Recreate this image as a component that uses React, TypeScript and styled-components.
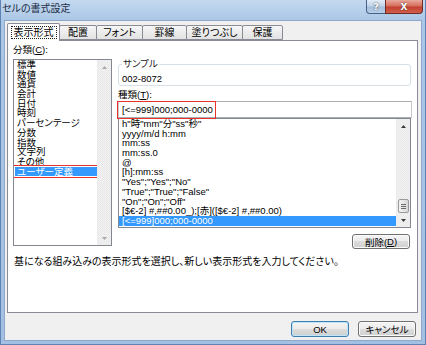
import React from "react";
import styled, { createGlobalStyle } from "styled-components";

const GlobalStyle = createGlobalStyle`
  html, body { margin: 0; padding: 0; }
  body {
    font-family: "Liberation Sans", "Noto Sans CJK JP", sans-serif;
    font-size: 9.5px;
    color: #000;
    background: #fff;
    font-feature-settings: "palt";
  }
  * { box-sizing: border-box; }
`;

const Window = styled.div`
  width: 426px;
  height: 345px;
  display: flex;
  flex-direction: column;
  background: linear-gradient(180deg, #c4d9ef 0px, #abc7e6 20px, #a3c0e2 100%);
  border-left: 1px solid #5f83b5;
  border-right: 1px solid #5f83b5;
  border-bottom: 1px solid #5f83b5;
`;

const TitleBar = styled.div`
  height: 20px;
  flex: none;
  display: flex;
  justify-content: space-between;
  align-items: flex-start;
`;

const Title = styled.div`
  padding: 3px 0 0 1px;
  font-size: 10px;
  line-height: 12px;
  color: #1c2d45;
`;

const Controls = styled.div`
  display: flex;
  margin-right: 2px;
`;

const CaptionButton = styled.div<{ $close?: boolean }>`
  width: ${(p) => (p.$close ? 38 : 20)}px;
  height: 14px;
  display: flex;
  align-items: center;
  justify-content: center;
  border: 1px solid ${(p) => (p.$close ? "#6e2a24" : "#44618a")};
  border-top: none;
  border-radius: ${(p) => (p.$close ? "0 0 4px 0" : "0 0 0 4px")};
  background: ${(p) =>
    p.$close
      ? "linear-gradient(180deg, #e9a99c 0%, #d7705f 45%, #c4402f 55%, #d0604c 100%)"
      : "linear-gradient(180deg, #e2ecf7 0%, #c3d5ea 45%, #a6bedb 55%, #b9cfe7 100%)"};
  color: #fff;
  font-family: "DejaVu Sans", sans-serif;
  font-weight: bold;
  font-size: 9px;
  text-shadow: 0 0 2px #333;
  & + & { margin-left: -1px; }
`;

const Client = styled.div`
  flex: 1;
  margin: 0 3px 3px 3px;
  background: #f0f0f0;
  border: 1px solid #8ea8cc;
  padding: 2px 3px 0 2px;
  display: flex;
  flex-direction: column;
`;

const TabRow = styled.div`
  height: 17px;
  display: flex;
  align-items: flex-end;
  position: relative;
  z-index: 1;
`;

const Tab = styled.div<{ $w: number; $active?: boolean }>`
  width: ${(p) => p.$w}px;
  height: ${(p) => (p.$active ? 18 : 15)}px;
  margin-bottom: ${(p) => (p.$active ? -1 : 0)}px;
  display: flex;
  align-items: center;
  justify-content: center;
  border: 1px solid #898c95;
  border-bottom: ${(p) => (p.$active ? "none" : "1px solid #898c95")};
  border-radius: 2px 2px 0 0;
  background: ${(p) =>
    p.$active ? "#fff" : "linear-gradient(180deg, #f7f7f7 0%, #ececec 50%, #e2e2e2 100%)"};
  font-size: 10px;
  line-height: 11px;
  padding-bottom: ${(p) => (p.$active ? 1 : 0)}px;
  & + & { margin-left: -1px; }
`;

const Focus = styled.span`
  border: 1px dotted #222;
  padding: 0 2px;
`;

const Panel = styled.div`
  height: 273px;
  flex: none;
  border: 1px solid #898c95;
  background: #fff;
  padding: 3px 5px 0 5px;
  display: flex;
  flex-direction: column;
`;

const Body = styled.div`
  display: grid;
  grid-template-columns: 99px 1fr;
  column-gap: 6px;
`;

const Column = styled.div`
  display: flex;
  flex-direction: column;
`;

const Label = styled.div<{ $top?: number }>`
  line-height: 12px;
  height: 12px;
  margin-top: ${(p) => p.$top ?? 0}px;
  white-space: nowrap;
`;

const ListBox = styled.div<{ $h: number; $top?: number }>`
  height: ${(p) => p.$h}px;
  margin-top: ${(p) => p.$top ?? 0}px;
  border: 1px solid #828790;
  background: #fff;
  display: flex;
  overflow: hidden;
`;

const Items = styled.div`
  flex: 1;
  min-width: 0;
`;

const Item = styled.div<{ $sel?: boolean; $marked?: boolean; $pad: number }>`
  line-height: 9.7px;
  height: 9.7px;
  padding-left: ${(p) => p.$pad}px;
  white-space: nowrap;
  background: ${(p) => (p.$sel ? "#3399ff" : "transparent")};
  color: ${(p) => (p.$sel ? "#fff" : "#000")};
  outline: ${(p) => (p.$marked ? "1.5px solid #e8322c" : "none")};
  outline-offset: 1px;
`;

const ScrollBar = styled.div`
  width: 14px;
  flex: none;
  display: flex;
  flex-direction: column;
  background: repeating-conic-gradient(#f3f3f3 0 25%, #e8e8e8 0 50%) 0 0 / 2px 2px;
  border-left: 1px solid #ececec;
`;

const ArrowBox = styled.div`
  height: 14px;
  flex: none;
  display: flex;
  align-items: center;
  justify-content: center;
`;

const Track = styled.div`
  flex: 1;
  display: flex;
  flex-direction: column;
  justify-content: flex-end;
`;

const Thumb = styled.div`
  height: 14px;
  margin: 0 1px;
  border: 1px solid #9a9a9a;
  border-radius: 2px;
  background: linear-gradient(90deg, #f4f4f4 0%, #e6e6e6 50%, #d6d6d6 100%);
  display: flex;
  flex-direction: column;
  align-items: center;
  justify-content: center;
  gap: 1px;
`;

const Grip = styled.div`
  width: 5px;
  height: 1px;
  background: #6a6a6a;
`;

const Group = styled.fieldset`
  margin: 15px 1px 0 0;
  padding: 4px 3px 0 3px;
  border: 1px solid #d5dfe5;
  border-radius: 3px;
  min-width: 0;
`;

const Legend = styled.legend`
  padding: 0 1px;
  line-height: 10px;
  color: #222;
`;

const SampleText = styled.div`
  line-height: 12px;
  height: 12px;
  font-size: 9.5px;
`;

const Input = styled.div`
  height: 17px;
  border: 1px solid #abadb3;
  border-left-color: #c7c9cf;
  border-right-color: #c7c9cf;
  padding-left: 3px;
  display: flex;
  align-items: center;
  white-space: nowrap;
  position: relative;
  z-index: 2;
`;

const Marked = styled.span`
  display: inline-block;
  width: 97px;
  padding: 3px 0 3px 4px;
  margin: -3px 0 -3px -4px;
  outline: 1.5px solid #e8322c;
  line-height: 10px;
`;

const ButtonRow = styled.div<{ $top: number; $right: number }>`
  display: flex;
  justify-content: flex-end;
  margin-top: ${(p) => p.$top}px;
  margin-right: ${(p) => p.$right}px;
`;

const Button = styled.div<{ $h: number; $default?: boolean }>`
  width: 58px;
  height: ${(p) => p.$h}px;
  display: flex;
  align-items: center;
  justify-content: center;
  border: 1px solid ${(p) => (p.$default ? "#3c7fb1" : "#707070")};
  border-radius: 3px;
  background: linear-gradient(180deg, #f4f4f4 0%, #ececec 50%, #dcdcdc 50%, #d0d0d0 100%);
  box-shadow: inset 0 0 0 1px ${(p) => (p.$default ? "#bfe6f8" : "#fbfbfb")};
  font-size: 9.5px;
  color: #000;
`;

const Description = styled.div`
  margin-top: 8px;
  padding-left: 1px;
  line-height: 10px;
  font-size: 10px;
  white-space: nowrap;
`;

const Footer = styled.div`
  display: flex;
  justify-content: flex-end;
  gap: 9px;
  padding: 8px 2px 0 0;
`;

const Arrow = ({ up, color }: { up?: boolean; color: string }) => (
  <svg width="5" height="3" viewBox="0 0 5 3">
    <polygon points={up ? "0,3 2.5,0 5,3" : "0,0 2.5,3 5,0"} fill={color} />
  </svg>
);

const tabs = [
  { label: "表示形式", w: 53, active: true },
  { label: "配置", w: 38 },
  { label: "フォント", w: 47 },
  { label: "罫線", w: 45 },
  { label: "塗りつぶし", w: 57 },
  { label: "保護", w: 41 },
];

const categories = [
  "標準",
  "数値",
  "通貨",
  "会計",
  "日付",
  "時刻",
  "パーセンテージ",
  "分数",
  "指数",
  "文字列",
  "その他",
  "ユーザー定義",
];

const formats = [
  'h"時"mm"分"ss"秒"',
  "yyyy/m/d h:mm",
  "mm:ss",
  "mm:ss.0",
  "@",
  "[h]:mm:ss",
  '"Yes";"Yes";"No"',
  '"True";"True";"False"',
  '"On";"On";"Off"',
  "[$€-2] #,##0.00_);[赤]([$€-2] #,##0.00)",
  "[<=999]000;000-0000",
];

export default function App() {
  return (
    <>
      <GlobalStyle />
      <Window>
        <TitleBar>
          <Title>セルの書式設定</Title>
          <Controls>
            <CaptionButton>?</CaptionButton>
            <CaptionButton $close>X</CaptionButton>
          </Controls>
        </TitleBar>
        <Client>
          <TabRow>
            {tabs.map((t) => (
              <Tab key={t.label} $w={t.w} $active={t.active}>
                {t.active ? <Focus>{t.label}</Focus> : t.label}
              </Tab>
            ))}
          </TabRow>
          <Panel>
            <Body>
              <Column>
                <Label>
                  分類(<u>C</u>):
                </Label>
                <ListBox $h={187} $top={3}>
                  <Items style={{ paddingLeft: 1 }}>
                    {categories.map((c, i) => {
                      const sel = i === categories.length - 1;
                      return (
                        <Item key={c} $pad={2} $sel={sel} $marked={sel}>
                          {c}
                        </Item>
                      );
                    })}
                  </Items>
                  <ScrollBar>
                    <ArrowBox>
                      <Arrow up color="#a8a8a8" />
                    </ArrowBox>
                    <Track />
                    <ArrowBox>
                      <Arrow color="#a8a8a8" />
                    </ArrowBox>
                  </ScrollBar>
                </ListBox>
              </Column>
              <Column>
                <Group>
                  <Legend>サンプル</Legend>
                  <SampleText>002-8072</SampleText>
                </Group>
                <Label $top={3}>
                  種類(<u>T</u>):
                </Label>
                <Input>
                  <Marked>[&lt;=999]000;000-0000</Marked>
                </Input>
                <ListBox $h={110} style={{ marginRight: 1 }}>
                  <Items>
                    {formats.map((f, i) => (
                      <Item key={f} $pad={3} $sel={i === formats.length - 1}>
                        {f}
                      </Item>
                    ))}
                  </Items>
                  <ScrollBar>
                    <ArrowBox>
                      <Arrow up color="#3a3a3a" />
                    </ArrowBox>
                    <Track>
                      <Thumb>
                        <Grip />
                        <Grip />
                        <Grip />
                      </Thumb>
                    </Track>
                    <ArrowBox>
                      <Arrow color="#3a3a3a" />
                    </ArrowBox>
                  </ScrollBar>
                </ListBox>
                <ButtonRow $top={6} $right={2}>
                  <Button $h={15}>
                    削除(<u>D</u>)
                  </Button>
                </ButtonRow>
              </Column>
            </Body>
            <Description>
              基になる組み込みの表示形式を選択し、新しい表示形式を入力してください。
            </Description>
          </Panel>
          <Footer>
            <Button $h={16} $default>
              OK
            </Button>
            <Button $h={16}>キャンセル</Button>
          </Footer>
        </Client>
      </Window>
    </>
  );
}
